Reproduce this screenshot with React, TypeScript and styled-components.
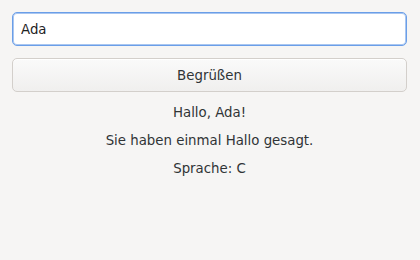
import React, { useState } from "react";
import styled, { createGlobalStyle } from "styled-components";

const Global = createGlobalStyle`
    html, body {
        margin: 0;
        padding: 0;
        background: #f6f5f4;
        font-family: "DejaVu Sans", "Noto Sans", sans-serif;
        font-size: 13.33px;
        color: #303436;
    }
`;

export default function App() {
    const [name, setName] = useState("Ada");

    return (
        <Window>
            <Global />
            <Entry value={name} onChange={(e) => setName(e.target.value)} />
            <Button type="button">Begrüßen</Button>
            <Labels>
                <Label>Hallo, {name}!</Label>
                <Label>Sie haben einmal Hallo gesagt.</Label>
                <Label>Sprache: C</Label>
            </Labels>
        </Window>
    );
}

const Window = styled.div`
    width: 420px;
    height: 260px;
    box-sizing: border-box;
    padding: 12px 13px 12px 12px;
    display: flex;
    flex-direction: column;
    gap: 12px;
`;

const Entry = styled.input`
    box-sizing: border-box;
    height: 34px;
    padding: 0 8px;
    border: 1px solid #6a9ee8;
    border-radius: 5px;
    box-shadow: inset 0 0 0 1px #a9c6f0;
    background: #ffffff;
    font-family: inherit;
    font-size: 13.33px;
    color: #1e2224;
    outline: none;
`;

const Button = styled.button`
    box-sizing: border-box;
    height: 34px;
    border: 1px solid #d3cfcb;
    border-radius: 5px;
    background: linear-gradient(to bottom, #fafafa, #f0efee);
    box-shadow: inset 0 1px #ffffff;
    font-family: inherit;
    font-size: 13.33px;
    color: #303436;
`;

const Labels = styled.div`
    display: flex;
    flex-direction: column;
    align-items: center;
    gap: 12px;
    padding-top: 1px;
`;

const Label = styled.div`
    line-height: 16px;
`;
